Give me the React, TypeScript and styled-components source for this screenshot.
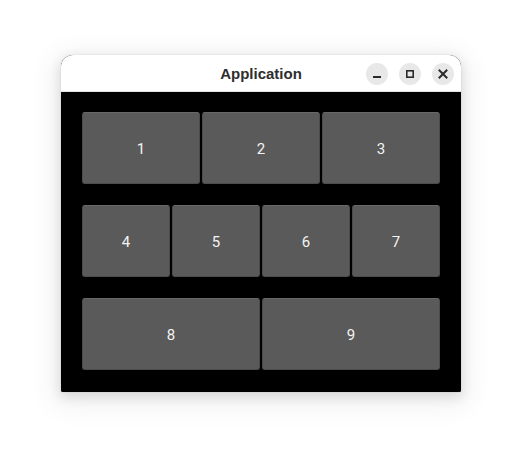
import styled, { createGlobalStyle } from 'styled-components';

const GlobalStyle = createGlobalStyle`
	html, body {
		margin: 0;
		padding: 0;
		background: #ffffff;
	}
	#root {
		width: 522px;
		height: 459px;
	}
`;

const Desktop = styled.div`
	width: 522px;
	height: 459px;
	box-sizing: border-box;
	padding-top: 55px;
	display: flex;
	justify-content: center;
	align-items: flex-start;
`;

const Window = styled.div`
	width: 400px;
	height: 337px;
	display: flex;
	flex-direction: column;
	border-radius: 12px 12px 2px 2px;
	overflow: hidden;
	background: #000;
	box-shadow: 0 0 0 1px rgba(0, 0, 0, 0.03), 0 4px 12px 2px rgba(0, 0, 0, 0.1),
		0 6px 28px 8px rgba(0, 0, 0, 0.06);
`;

const TitleBar = styled.div`
	position: relative;
	height: 37px;
	flex: none;
	display: flex;
	align-items: center;
	justify-content: center;
	background: #ffffff;
	border-bottom: 1px solid #e4e4e4;
	box-sizing: border-box;
`;

const Title = styled.span`
	font-family: 'Liberation Sans', Arial, sans-serif;
	font-weight: bold;
	font-size: 15px;
	color: #2e2e2e;
`;

const Controls = styled.div`
	position: absolute;
	right: 7px;
	top: 8px;
	display: flex;
	gap: 11px;
`;

const ControlButton = styled.button`
	width: 22px;
	height: 22px;
	padding: 0;
	border: none;
	border-radius: 50%;
	background: #e8e8e8;
	display: flex;
	align-items: center;
	justify-content: center;
	color: #2a2a2a;
`;

const Content = styled.div`
	flex: 1;
	display: flex;
	flex-direction: column;
	gap: 21px;
	padding: 20px 21px 22px;
	background: #000;
`;

const Row = styled.div`
	height: 72px;
	display: flex;
	gap: 2px;
`;

const Cell = styled.button`
	flex: 1;
	min-width: 0;
	padding: 2px 0 0;
	background: #5a5a5a;
	border: 1px solid #4c4c4c;
	border-top-color: #686868;
	border-radius: 3px;
	color: #f4f4f4;
	font-family: Roboto, 'Noto Sans', sans-serif;
	font-size: 15px;
	display: flex;
	align-items: center;
	justify-content: center;
`;

const rows = [
	['1', '2', '3'],
	['4', '5', '6', '7'],
	['8', '9'],
];

const App = () => {
	return (
		<>
			<GlobalStyle />
			<Desktop>
				<Window>
					<TitleBar>
						<Title>Application</Title>
						<Controls>
							<ControlButton aria-label='minimize'>
								<svg width='10' height='10' viewBox='0 0 10 10'>
									<rect x='1' y='7' width='8' height='2' fill='currentColor' />
								</svg>
							</ControlButton>
							<ControlButton aria-label='maximize'>
								<svg width='10' height='10' viewBox='0 0 10 10'>
									<rect x='1.8' y='1.8' width='6.4' height='6.4' fill='none' stroke='currentColor' strokeWidth='1.6' />
								</svg>
							</ControlButton>
							<ControlButton aria-label='close'>
								<svg width='10' height='10' viewBox='0 0 10 10'>
									<path d='M1.5 1.5 L8.5 8.5 M8.5 1.5 L1.5 8.5' stroke='currentColor' strokeWidth='2' strokeLinecap='square' />
								</svg>
							</ControlButton>
						</Controls>
					</TitleBar>
					<Content>
						{rows.map((row, i) => (
							<Row key={i}>
								{row.map((label) => (
									<Cell key={label}>{label}</Cell>
								))}
							</Row>
						))}
					</Content>
				</Window>
			</Desktop>
		</>
	);
};

export default App;
